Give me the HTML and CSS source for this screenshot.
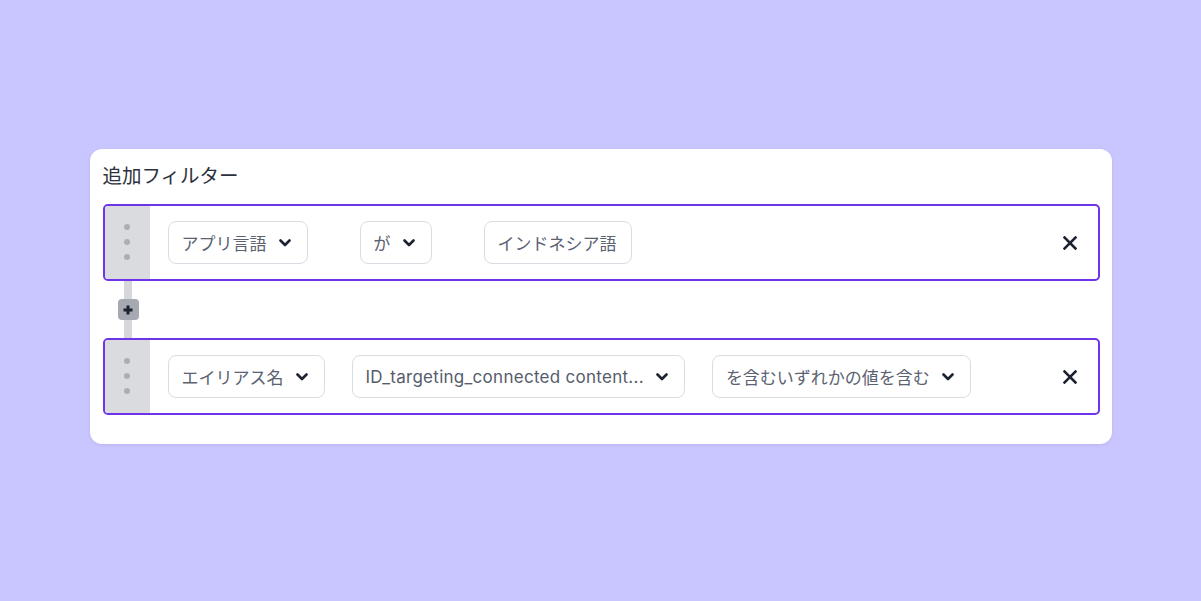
FILE: index.html
```html
<!DOCTYPE html>
<html lang="ja">
<head>
<meta charset="utf-8">
<link rel="stylesheet" href="styles.css">
</head>
<body>
<div class="card">
  <div class="title">追加フィルター</div>
  <div class="filter">
    <div class="handle"><span class="dot"></span><span class="dot"></span><span class="dot"></span></div>
    <div class="fields fields-wide">
      <div class="pill">アプリ言語<svg class="chev" viewBox="0 0 12 8"><path d="M1.5 1.5 6 6l4.5-4.5"/></svg></div>
      <div class="pill">が<svg class="chev" viewBox="0 0 12 8"><path d="M1.5 1.5 6 6l4.5-4.5"/></svg></div>
      <div class="pill pill-plain">インドネシア語</div>
    </div>
    <svg class="close" viewBox="0 0 14 14"><path d="M1.5 1.5l11 11M12.5 1.5l-11 11"/></svg>
  </div>
  <div class="connector">
    <span class="bar"></span>
    <span class="plus"><svg viewBox="0 0 12 12"><path d="M6 1.5v9M1.5 6h9"/></svg></span>
    <span class="bar"></span>
  </div>
  <div class="filter">
    <div class="handle"><span class="dot"></span><span class="dot"></span><span class="dot"></span></div>
    <div class="fields">
      <div class="pill">エイリアス名<svg class="chev" viewBox="0 0 12 8"><path d="M1.5 1.5 6 6l4.5-4.5"/></svg></div>
      <div class="pill"><span class="latin">ID_targeting_connected content...</span><svg class="chev" viewBox="0 0 12 8"><path d="M1.5 1.5 6 6l4.5-4.5"/></svg></div>
      <div class="pill">を含むいずれかの値を含む<svg class="chev" viewBox="0 0 12 8"><path d="M1.5 1.5 6 6l4.5-4.5"/></svg></div>
    </div>
    <svg class="close" viewBox="0 0 14 14"><path d="M1.5 1.5l11 11M12.5 1.5l-11 11"/></svg>
  </div>
</div>
</body>
</html>
```
FILE: styles.css
```css
* { box-sizing: border-box; }
html, body { margin: 0; padding: 0; }
body {
  width: 1201px;
  height: 601px;
  background: #c9c5fe;
  display: flex;
  justify-content: center;
  align-items: flex-start;
  padding-top: 149px;
  font-family: Inter, "Noto Sans CJK JP", sans-serif;
}
.card {
  width: 1022px;
  background: #ffffff;
  border-radius: 12px;
  padding: 10px 12px 29px 13px;
  display: flex;
  flex-direction: column;
  box-shadow: 0 1px 3px rgba(80, 70, 160, 0.12);
}
.title {
  font-family: "Noto Sans CJK JP", sans-serif;
  font-size: 19.5px;
  line-height: 32px;
  color: #2c313d;
  margin-bottom: 13px;
}
.filter {
  height: 77px;
  border: 2px solid #6f33ea;
  border-radius: 5px;
  display: flex;
  align-items: stretch;
  overflow: hidden;
}
.handle {
  width: 45px;
  background: #dadbde;
  display: flex;
  flex-direction: column;
  align-items: center;
  padding-top: 18px;
  gap: 9px;
}
.dot {
  width: 6px;
  height: 6px;
  border-radius: 50%;
  background: #acaeb5;
}
.fields {
  flex: 1;
  display: flex;
  align-items: center;
  padding-left: 18px;
  gap: 27px;
}
.fields-wide { gap: 52px; }
.pill {
  height: 43px;
  border: 1px solid #d9dce2;
  border-radius: 8px;
  padding: 0 13px;
  display: flex;
  align-items: center;
  font-size: 17px;
  color: #5b6271;
  white-space: nowrap;
}
.pill-plain { padding: 0 14px 0 13px; }
.latin {
  letter-spacing: 0.28px;
  color: #555c6b;
}
.chev {
  width: 12px;
  height: 8px;
  margin-left: 12px;
  margin-right: 3px;
  fill: none;
  stroke: #1d2230;
  stroke-width: 2.6;
  stroke-linecap: round;
  stroke-linejoin: round;
}
.close {
  width: 14px;
  height: 14px;
  align-self: center;
  margin-right: 21px;
  fill: none;
  stroke: #1d2230;
  stroke-width: 2.5;
  stroke-linecap: square;
}
.connector {
  height: 57px;
  width: 45px;
  margin-left: 3px;
  display: flex;
  flex-direction: column;
  align-items: center;
}
.bar {
  flex: 1;
  width: 8px;
  background: #d6d7db;
}
.plus {
  width: 21px;
  height: 21px;
  border-radius: 4px;
  background: #a6a9b1;
  display: flex;
  align-items: center;
  justify-content: center;
}
.plus svg {
  width: 12px;
  height: 12px;
  fill: none;
  stroke: #1d2230;
  stroke-width: 3;
}
```
